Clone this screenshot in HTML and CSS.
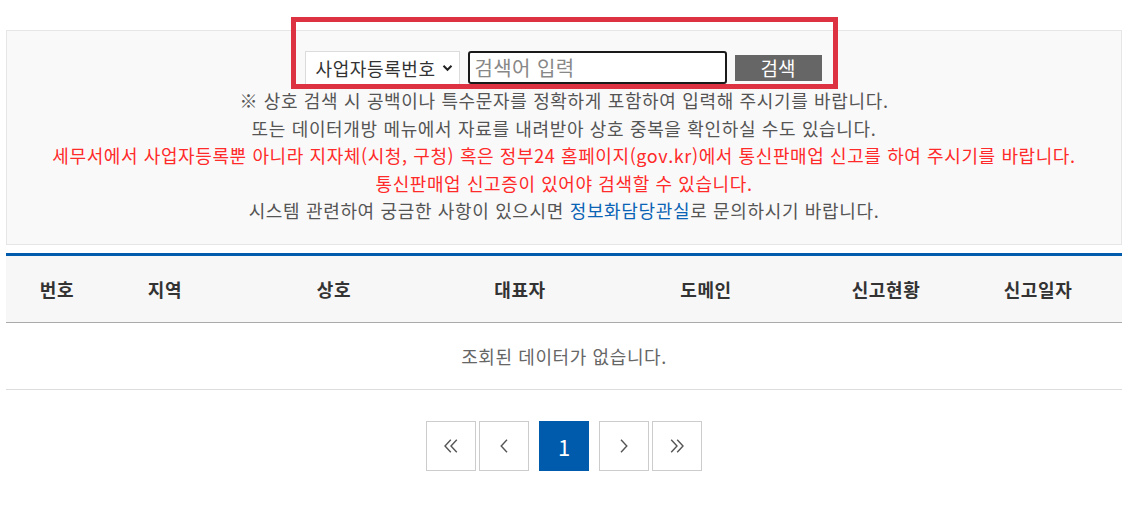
FILE: index.html
```html
<!DOCTYPE html>
<html lang="ko">
<head>
<meta charset="utf-8">
<title>통신판매사업자 검색</title>
<link rel="stylesheet" href="styles.css">
</head>
<body>
<div class="page">
  <div class="search-box">
    <form class="search-row">
      <div class="select">
        <span>사업자등록번호</span>
        <svg width="11" height="8" viewBox="0 0 11 8"><polyline points="1.5,1.8 5.5,5.8 9.5,1.8" fill="none" stroke="#222" stroke-width="2"/></svg>
      </div>
      <input class="keyword" type="text" placeholder="검색어 입력">
      <button class="btn-search" type="button">검색</button>
    </form>
    <div class="notice">
      <p>※ 상호 검색 시 공백이나 특수문자를 정확하게 포함하여 입력해 주시기를 바랍니다.</p>
      <p>또는 데이터개방 메뉴에서 자료를 내려받아 상호 중복을 확인하실 수도 있습니다.</p>
      <p class="red">세무서에서 사업자등록뿐 아니라 지자체(시청, 구청) 혹은 정부24 홈페이지(gov.kr)에서 통신판매업 신고를 하여 주시기를 바랍니다.</p>
      <p class="red">통신판매업 신고증이 있어야 검색할 수 있습니다.</p>
      <p>시스템 관련하여 궁금한 사항이 있으시면 <a href="#">정보화담당관실</a>로 문의하시기 바랍니다.</p>
    </div>
    <div class="highlight"></div>
  </div>

  <table class="list">
    <colgroup>
      <col class="c1"><col class="c2"><col class="c3"><col class="c4"><col class="c5"><col class="c6"><col class="c7">
    </colgroup>
    <thead>
      <tr><th>번호</th><th>지역</th><th>상호</th><th>대표자</th><th>도메인</th><th>신고현황</th><th>신고일자</th></tr>
    </thead>
    <tbody>
      <tr><td colspan="7" class="empty">조회된 데이터가 없습니다.</td></tr>
    </tbody>
  </table>

  <nav class="pager">
    <a class="pg first" href="#"><svg width="14" height="14" viewBox="0 0 14 14"><polyline points="6.8,0.8 1,7 6.8,13.2" fill="none" stroke="#555" stroke-width="1.4"/><polyline points="12.8,0.8 7,7 12.8,13.2" fill="none" stroke="#555" stroke-width="1.4"/></svg></a>
    <a class="pg prev" href="#"><svg width="8" height="14" viewBox="0 0 8 14"><polyline points="7,0.8 1.2,7 7,13.2" fill="none" stroke="#555" stroke-width="1.4"/></svg></a>
    <a class="pg active" href="#">1</a>
    <a class="pg next" href="#"><svg width="8" height="14" viewBox="0 0 8 14"><polyline points="1,0.8 6.8,7 1,13.2" fill="none" stroke="#555" stroke-width="1.4"/></svg></a>
    <a class="pg last" href="#"><svg width="14" height="14" viewBox="0 0 14 14"><polyline points="1.2,0.8 7,7 1.2,13.2" fill="none" stroke="#555" stroke-width="1.4"/><polyline points="7.2,0.8 13,7 7.2,13.2" fill="none" stroke="#555" stroke-width="1.4"/></svg></a>
  </nav>
</div>
</body>
</html>
```

FILE: styles.css
```css
* { box-sizing: border-box; }
html, body { margin: 0; padding: 0; background: #fff; }
body {
  font-family: "Noto Sans CJK KR", "Noto Sans", sans-serif;
  font-size: 18px;
  color: #555;
}
.page {
  width: 1116px;
  margin: 0 0 0 6px;
  padding-top: 30px;
}
.search-box {
  position: relative;
  background: #f9f9f9;
  border: 1px solid #e6e6e6;
  padding: 20px 0 19px;
}
.search-row {
  display: flex;
  justify-content: center;
  align-items: center;
  gap: 8px;
  margin: 0;
  height: 34px;
}
.select {
  width: 155px;
  height: 34px;
  margin-left: -2px;
  background: #fff;
  border: 1px solid #dcdcdc;
  display: flex;
  align-items: center;
  justify-content: space-between;
  padding: 0 6px 0 10px;
  color: #333;
  font-size: 18px;
  letter-spacing: 0.6px;
  line-height: 1;
}
.keyword {
  width: 259px;
  height: 33px;
  border: 2px solid #1a1a1a;
  border-radius: 3px;
  background: #fff;
  padding: 0 5px;
  font-family: inherit;
  font-size: 20px;
  color: #333;
  outline: none;
  margin-top: -1px;
}
.keyword::placeholder { color: #888; letter-spacing: 0.4px; }
.btn-search {
  width: 87px;
  height: 26px;
  border: 0;
  background: #666;
  color: #fff;
  font-family: inherit;
  font-size: 19px;
  line-height: 26px;
  padding: 0;
  cursor: pointer;
}
.notice { margin-top: 2px; text-align: center; letter-spacing: 0.65px; }
.notice p { margin: 0; line-height: 27.5px; }
.notice .red { color: #ff2a2a; letter-spacing: 0.6px; }
.notice a { color: #0b63b5; text-decoration: none; }

.highlight {
  position: absolute;
  left: 284px;
  top: -14px;
  width: 547px;
  height: 72px;
  border: 5px solid #dc3242;
  pointer-events: none;
}

.list {
  width: 1116px;
  margin-top: 8px;
  border-collapse: collapse;
  table-layout: fixed;
  border-top: 3px solid #005bac;
}
.list .c1 { width: 102px; }
.list .c2 { width: 114px; }
.list .c3 { width: 224px; }
.list .c4 { width: 148px; }
.list .c5 { width: 224px; }
.list .c6 { width: 136px; }
.list .c7 { width: 168px; }
.list th {
  height: 68px;
  background: #f7f7f7;
  border-bottom: 1px solid #aaa;
  color: #333;
  font-weight: bold;
  font-size: 18px;
  letter-spacing: 0.6px;
  padding: 0;
}
.list td.empty {
  height: 67px;
  text-align: center;
  border-bottom: 1px solid #ddd;
  color: #666;
  letter-spacing: 0.6px;
  padding: 0;
}

.pager {
  display: flex;
  justify-content: center;
  margin-top: 31px;
}
.pg {
  width: 50px;
  height: 50px;
  border: 1px solid #ccc;
  display: flex;
  align-items: center;
  justify-content: center;
  text-decoration: none;
  background: #fff;
}
.pg + .pg { margin-left: 3px; }
.pg.active {
  margin: 0 7px 0 10px;
  background: #005bac;
  border-color: #005bac;
  color: #fff;
  font-size: 22px;
}
.pg.next { margin-left: 3px; }
```
